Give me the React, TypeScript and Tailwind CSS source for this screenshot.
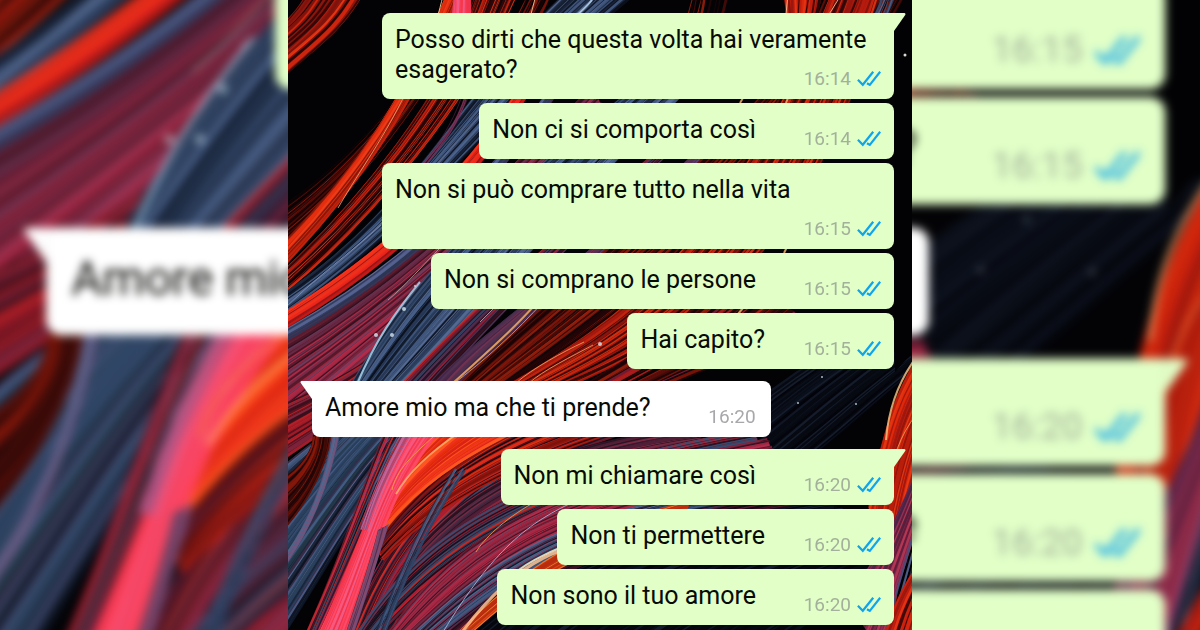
type Curve = [number, number, number, number, number, number, number, number];

interface Band {
  from: Curve;
  to: Curve;
  count: number;
  width: number;
  colors: string[];
  base?: string;
}

interface Message {
  text: string;
  time: string;
  side: "in" | "out";
  room: string;
  tail?: boolean;
}

const REDS = ["#d8280f", "#7c130c", "#b81c10", "#2c0607", "#ea3613", "#120406", "#92160f"];
const EMBER = ["#4a0c08", "#1a0506", "#7a150b", "#050305", "#9e210d", "#240608"];
const BLUES = ["#3d5478", "#1a2438", "#5a6f98", "#243450", "#0c1220", "#485f88", "#2c4260"];
const CRIMSON = ["#8c2038", "#4a1424", "#a82844", "#2a1020", "#6a2c48", "#bb2d4c", "#5c1a2c", "#70405f"];
const MIXED = ["#b52035", "#241424", "#394c70", "#7a1c30", "#12101c", "#d82a24", "#5c3358", "#3a101c"];
const PINK = ["#fa3548", "#f8587e", "#ff4a68", "#f0344e", "#f05c8a", "#ff3c4c"];
const NIGHT = ["#070a12", "#121928", "#03040a", "#182030", "#0b101c"];

const BANDS: Band[] = [
  { from: [20, -10, 10, 10, -5, 25, -20, 35], to: [78, -10, 50, 40, 25, 48, -20, 92], count: 24, width: 3, colors: REDS, base: "#8a170d" },
  { from: [160, -10, 150, 60, 70, 160, -20, 215], to: [190, -10, 150, 90, 70, 190, -20, 270], count: 30, width: 2, colors: EMBER, base: "#1c0506" },
  { from: [160, -10, 120, 90, 70, 170, -20, 258], to: [175, -10, 130, 95, 75, 190, -20, 282], count: 16, width: 3, colors: ["#e83010", "#c4220c", "#f2401a", "#7c160a"], base: "#cc280e" },
  { from: [190, -10, 160, 90, 70, 205, -20, 285], to: [230, -10, 190, 90, 80, 230, -20, 305], count: 24, width: 2, colors: REDS, base: "#2a080c" },
  { from: [166, -10, 164, 20, 162, 30, 160, 40], to: [182, -10, 184, 20, 182, 30, 180, 40], count: 10, width: 3, colors: PINK, base: "#e04468" },
  { from: [280, -10, 170, 90, 120, 220, -20, 303], to: [350, -10, 200, 110, 140, 220, -20, 325], count: 30, width: 3, colors: BLUES, base: "#1a2338" },
  { from: [175, 95, 165, 125, 150, 145, 130, 170], to: [182, 95, 172, 125, 155, 145, 135, 170], count: 4, width: 2, colors: ["#843058", "#5c2448"] },
  { from: [230, 90, 170, 180, 100, 250, -20, 322], to: [240, 95, 180, 190, 110, 265, -20, 338], count: 13, width: 3, colors: ["#f0281c", "#c91a18", "#f6351c", "#8a1418"], base: "#cf1c18" },
  { from: [260, 90, 190, 190, 110, 270, -20, 340], to: [270, 90, 200, 200, 120, 280, -20, 352], count: 9, width: 3, colors: ["#56618f", "#2c3552", "#6c74a4", "#453458"], base: "#343d5e" },
  { from: [300, 90, 200, 190, 110, 285, -20, 352], to: [330, 120, 220, 250, 110, 330, -20, 445], count: 62, width: 3, colors: CRIMSON, base: "#651c30" },
  { from: [330, 130, 220, 260, 110, 360, -20, 410], to: [350, 130, 230, 260, 110, 390, -20, 470], count: 28, width: 3, colors: ["#a81c28", "#5e1220", "#c42428", "#35101c", "#812640"], base: "#5c1220" },
  { from: [370, 70, 190, 210, 120, 280, 55, 400], to: [410, 80, 240, 240, 180, 330, 90, 410], count: 52, width: 3, colors: BLUES, base: "#2c4060" },
  { from: [420, 110, 250, 250, 160, 330, 100, 400], to: [430, 110, 260, 260, 200, 330, 135, 400], count: 22, width: 2, colors: MIXED, base: "#251426" },
  { from: [430, 130, 270, 290, 190, 330, 135, 395], to: [440, 130, 280, 300, 220, 330, 165, 395], count: 12, width: 4, colors: ["#604070", "#513050", "#7a3450", "#40264a"], base: "#50304e" },
  { from: [560, -10, 400, 200, 260, 290, 160, 395], to: [620, -10, 500, 220, 370, 310, 220, 395], count: 50, width: 3, colors: EMBER, base: "#260708" },
  { from: [540, -10, 430, 260, 320, 320, 200, 395], to: [600, -10, 520, 270, 400, 340, 260, 395], count: 32, width: 3, colors: REDS, base: "#590e08" },
  { from: [440, 270, 400, 320, 340, 360, 270, 400], to: [520, 320, 480, 350, 410, 370, 350, 400], count: 34, width: 3, colors: [...EMBER, "#b81e20", "#7c203c"], base: "#2a080a" },
  { from: [560, 340, 510, 370, 460, 405, 410, 450], to: [640, 360, 600, 390, 560, 430, 520, 460], count: 34, width: 3, colors: NIGHT, base: "#070a12" },
  { from: [80, 395, 50, 430, 20, 440, -20, 480], to: [180, 395, 90, 460, 60, 540, -20, 660], count: 60, width: 4, colors: [...BLUES, "#243c4c", "#3c2c48"], base: "#1c2c40" },
  { from: [25, 435, 25, 455, 5, 475, -20, 485], to: [42, 435, 38, 475, 10, 520, -20, 545], count: 20, width: 3, colors: ["#350a08", "#1b0507", "#651108", "#8c190a"], base: "#2d0908" },
  { from: [45, 425, 40, 470, 22, 530, -20, 575], to: [54, 425, 45, 475, 25, 535, -20, 590], count: 7, width: 3, colors: ["#526b92", "#3a4c70", "#775078"], base: "#3c4e72" },
  { from: [110, 400, 75, 470, 70, 520, 10, 650], to: [160, 400, 100, 480, 75, 540, 25, 650], count: 24, width: 2, colors: [...MIXED, "#c42c54"] },
  { from: [380, 400, 150, 430, 100, 530, 50, 650], to: [430, 410, 270, 440, 130, 510, 100, 650], count: 66, width: 3, colors: MIXED, base: "#571827" },
  { from: [300, 395, 200, 435, 140, 470, 90, 545], to: [430, 400, 280, 445, 170, 480, 95, 560], count: 44, width: 3, colors: [...REDS, "#e8301c", "#d42c24", "#4a1830"], base: "#8c180e" },
  { from: [190, 395, 140, 435, 100, 480, 78, 545], to: [310, 395, 190, 445, 130, 480, 85, 545], count: 36, width: 3, colors: ["#f24012", "#e82e0c", "#ff5720", "#d92215", "#ee3225"], base: "#e53010" },
  { from: [380, 430, 230, 450, 115, 510, 75, 650], to: [420, 440, 270, 460, 135, 530, 88, 650], count: 30, width: 3, colors: ["#532038", "#26121e", "#7c2a44", "#402c44", "#a3233a"], base: "#331625" },
  { from: [130, 415, 80, 500, 70, 560, 22, 650], to: [165, 415, 90, 500, 90, 560, 54, 650], count: 40, width: 4, colors: PINK, base: "#f53d58" },
  { from: [122, 415, 95, 460, 80, 500, 72, 530], to: [142, 410, 105, 460, 90, 500, 80, 530], count: 8, width: 2, colors: ["#c05c90", "#d4669c", "#8c5284", "#ee5c88"] },
  { from: [90, 530, 80, 570, 65, 610, 52, 650], to: [100, 525, 88, 565, 75, 610, 60, 650], count: 9, width: 2, colors: ["#77507d", "#543052", "#904868"], base: "#54304e" },
  { from: [460, 430, 230, 470, 125, 530, 60, 650], to: [480, 450, 270, 490, 150, 560, 80, 650], count: 50, width: 3, colors: [...MIXED, "#dc2418"], base: "#481120" },
  { from: [165, 470, 138, 515, 120, 550, 82, 650], to: [180, 470, 145, 520, 126, 560, 92, 650], count: 10, width: 2, colors: ["#3e5e88", "#4c6c94", "#2b3f60", "#1c2840"] },
  { from: [480, 440, 230, 490, 155, 550, 90, 650], to: [500, 490, 260, 500, 190, 590, 110, 650], count: 56, width: 3, colors: CRIMSON, base: "#7c1f37" },
  { from: [520, 480, 280, 500, 200, 560, 110, 650], to: [520, 500, 300, 510, 210, 600, 140, 650], count: 44, width: 3, colors: [...BLUES, "#5f2c4c", "#8c2c4c"], base: "#252b46" },
  { from: [520, 490, 290, 530, 220, 580, 140, 650], to: [530, 510, 300, 540, 230, 590, 155, 650], count: 18, width: 3, colors: ["#170b18", "#411424", "#0a0810", "#662038"], base: "#160b16" },
  { from: [400, 500, 260, 540, 215, 590, 150, 650], to: [400, 520, 270, 555, 220, 600, 165, 650], count: 10, width: 3, colors: ["#e44916", "#b92c0e", "#f18235"], base: "#bf3512" },
  { from: [540, 500, 300, 540, 220, 600, 168, 650], to: [620, 560, 560, 590, 500, 640, 420, 690], count: 34, width: 4, colors: NIGHT, base: "#05070c" },
  { from: [650, 330, 605, 385, 600, 420, 580, 500], to: [690, 370, 640, 430, 620, 500, 600, 660], count: 34, width: 3, colors: ["#e32a0c", "#b81f0c", "#8c140c", "#ec3c12", "#9c1710"], base: "#b81c0c" },
  { from: [640, 440, 620, 490, 605, 530, 560, 600], to: [660, 450, 630, 510, 620, 560, 590, 650], count: 16, width: 3, colors: ["#943158", "#5c1c38", "#b93a55", "#462648"], base: "#80264a" },
  { from: [645, 470, 625, 530, 615, 570, 590, 660], to: [660, 480, 650, 520, 640, 580, 610, 660], count: 10, width: 3, colors: ["#3c5080", "#252a48", "#51618c"] },
  { from: [650, 540, 620, 570, 600, 610, 590, 660], to: [670, 560, 650, 590, 640, 620, 630, 660], count: 14, width: 4, colors: REDS, base: "#c9200f" },
  { from: [240, -10, 235, 5, 230, 15, 220, 30], to: [265, -10, 260, 5, 255, 15, 245, 30], count: 12, width: 3, colors: EMBER },
  { from: [405, -10, 402, 5, 400, 15, 395, 30], to: [440, -10, 438, 5, 436, 15, 430, 30], count: 14, width: 3, colors: EMBER },
  { from: [495, -10, 497, 5, 498, 15, 500, 30], to: [535, -10, 532, 5, 530, 15, 525, 30], count: 14, width: 3, colors: REDS, base: "#c01c0c" },
  { from: [565, -10, 560, 5, 555, 15, 548, 30], to: [585, -10, 582, 5, 578, 15, 570, 30], count: 10, width: 3, colors: REDS, base: "#b01a0c" },
  { from: [595, -10, 590, 5, 585, 15, 575, 30], to: [608, -10, 605, 5, 600, 15, 592, 30], count: 7, width: 3, colors: BLUES },
];

const GLINTS: { d: string; color: string; width: number }[] = [
  { d: "M118 92C95 140 75 165 50 208", color: "#e8a070", width: 1 },
  { d: "M155 -5C153 5 151 10 149 20", color: "#f4d7a0", width: 1 },
  { d: "M248 -5L243 14M500 -5L498 14M553 -5L540 16", color: "#f4c9a0", width: 1 },
  { d: "M304 0C298 8 292 12 286 18", color: "#b8d4ea", width: 2 },
  { d: "M93 225C60 255 30 275 -10 315", color: "#7c92b8", width: 1 },
  { d: "M152 248C135 265 118 285 100 300", color: "#b49c96", width: 1 },
  { d: "M132 282C105 315 88 340 69 384", color: "#a9d3ec", width: 2 },
  { d: "M206 308L192 322M255 302C230 330 195 362 165 384", color: "#e89a58", width: 1 },
  { d: "M245 307C220 335 190 360 166 382", color: "#f5ad62", width: 2 },
  { d: "M296 342C275 352 245 368 228 383M305 345C285 356 255 370 240 384", color: "#f0a060", width: 1 },
  { d: "M145 437C125 455 108 470 104 490", color: "#f6a13c", width: 1 },
  { d: "M172 432C145 450 122 470 108 494", color: "#ffb16a", width: 2 },
  { d: "M245 503C215 520 195 540 188 552", color: "#e8a050", width: 1 },
  { d: "M290 500C240 522 205 550 155 632", color: "#a9b9e2", width: 1 },
  { d: "M274 550C240 562 205 590 172 635", color: "#ffc490", width: 3 },
  { d: "M274 547C255 555 235 565 225 575", color: "#fff0c8", width: 2 },
  { d: "M630 355C607 385 600 415 598 440", color: "#f1bd7c", width: 2 },
  { d: "M628 415C612 435 604 460 598 490", color: "#f09a5a", width: 1 },
  { d: "M500 245L496 253M455 98L452 103M500 98L498 103M455 308L450 314", color: "#f0b070", width: 2 },
];

const SPARKS: [number, number, number][] = [
  [116, 309, 2], [88, 335, 2], [104, 335, 2], [127, 286, 1], [312, 344, 2],
  [534, 377, 1], [510, 403, 1], [568, 404, 1],
];

function random(seed: number) {
  const value = Math.sin(seed * 127.1 + 11.7) * 43758.5453;
  return value - Math.floor(value);
}

function toPath(c: number[]) {
  return `M${c[0]} ${c[1]}C${c[2]} ${c[3]} ${c[4]} ${c[5]} ${c[6]} ${c[7]}`;
}

const STRANDS = BANDS.map((band, b) => {
  const { from: a, to: z } = band;
  return {
    base: band.base,
    area: `${toPath(a)}L${z[6]} ${z[7]}C${z[4]} ${z[5]} ${z[2]} ${z[3]} ${z[0]} ${z[1]}Z`,
    lines: Array.from({ length: band.count }, (_, i) => {
      const seed = b * 97 + i * 3 + 1;
      const t = (i + random(seed)) / band.count;
      const points = a.map((v, k) => Math.round((v + (z[k] - v) * t + (random(seed + k) - 0.5) * 3) * 10) / 10);
      return {
        d: toPath(points),
        color: band.colors[Math.floor(random(seed + 1) * band.colors.length)],
        width: band.width * (0.3 + random(seed + 2) * 0.7),
      };
    }),
  };
});

const MESSAGES: Message[] = [
  { text: "Posso dirti che questa volta hai veramente esagerato?", time: "16:14", side: "out", room: "w-[116px]", tail: true },
  { text: "Non ci si comporta così", time: "16:14", side: "out", room: "w-[125px]" },
  { text: "Non si può comprare tutto nella vita", time: "16:15", side: "out", room: "w-[116px]" },
  { text: "Non si comprano le persone", time: "16:15", side: "out", room: "w-[125px]" },
  { text: "Hai capito?", time: "16:15", side: "out", room: "w-[116px]" },
  { text: "Amore mio ma che ti prende?", time: "16:20", side: "in", room: "w-[107px]", tail: true },
  { text: "Non mi chiamare così", time: "16:20", side: "out", room: "w-[125px]", tail: true },
  { text: "Non ti permettere", time: "16:20", side: "out", room: "w-[116px]" },
  { text: "Non sono il tuo amore", time: "16:20", side: "out", room: "w-[125px]" },
];

function Wallpaper() {
  return (
    <svg
      className="absolute inset-0 size-full overflow-visible"
      viewBox="0 0 624 630"
      preserveAspectRatio="xMidYMid slice"
      fill="none"
      aria-hidden="true"
    >
      <path d="M-40 -40H664V670H-40Z" fill="#030306" />
      {STRANDS.map((band, b) => (
        <g key={b}>
          {band.base && <path d={band.area} fill={band.base} />}
          {band.lines.map((line, i) => (
            <path key={i} d={line.d} stroke={line.color} strokeWidth={line.width} opacity="0.85" />
          ))}
        </g>
      ))}
      {GLINTS.map((glint, i) => (
        <path key={i} d={glint.d} stroke={glint.color} strokeWidth={glint.width} opacity="0.85" />
      ))}
      {SPARKS.map(([x, y, r], i) => (
        <circle key={i} cx={x} cy={y} r={r} fill="#d5e8f2" opacity="0.8" />
      ))}
      <path d="M607 20H640V335L607 372Z" fill="#020204" />
      <circle cx="617" cy="55" r="1.5" fill="#d8d8d0" />
    </svg>
  );
}

function ReadTicks() {
  return (
    <svg className="h-4 w-6" viewBox="0 0 24 16" fill="none" stroke="#0ea5ee" strokeWidth="2.2" aria-label="Letto" role="img">
      <path d="M0.9 8.8L5.8 13.8L16.2 0.8" />
      <path d="M10 12.2L12.8 13.9L23.2 0.8" />
    </svg>
  );
}

function Bubble({ message }: { message: Message }) {
  const sent = message.side === "out";
  return (
    <li
      className={
        "relative max-w-[512px] rounded-lg px-[13px] pt-3 pb-[14px] " +
        (sent ? "self-end bg-[#e1ffc7] " : "my-2 ml-1.5 self-start bg-white ") +
        (message.tail ? (sent ? "rounded-tr-none" : "rounded-tl-none") : "")
      }
    >
      {message.tail && (
        <svg
          className={"absolute top-0 h-[18px] w-3 " + (sent ? "left-full" : "right-full -scale-x-100")}
          viewBox="0 0 12 18"
          aria-hidden="true"
        >
          <path d="M-1 0H10.5Q12 0.5 11.2 2L0 18H-1Z" fill={sent ? "#e1ffc7" : "#ffffff"} />
        </svg>
      )}
      <p className="text-[25px] leading-[30px] text-[#080a06]">
        {message.text}
        <span className={"inline-block h-px " + message.room} />
      </p>
      <div className={"absolute bottom-2 flex items-center gap-1.5 " + (sent ? "right-[13px]" : "right-[15px]")}>
        <time className={"text-[19px] leading-6 " + (sent ? "text-[#a3b09b]" : "text-[#a8a8ac]")}>{message.time}</time>
        {sent && <ReadTicks />}
      </div>
    </li>
  );
}

function Conversation() {
  return (
    <div className="relative min-h-full">
      <Wallpaper />
      <ul className="relative flex flex-col gap-1 px-[18px] pt-[13px] pb-[5px]">
        {MESSAGES.map((message) => (
          <Bubble key={message.text} message={message} />
        ))}
      </ul>
    </div>
  );
}

export default function App() {
  return (
    <div className="relative flex min-h-screen justify-center overflow-hidden bg-black font-['Roboto',sans-serif]">
      <div className="absolute inset-0 blur-[5px]" aria-hidden="true">
        <div className="w-[52%] origin-top-left -translate-y-[505px] scale-[1.923]">
          <Conversation />
        </div>
      </div>
      <main className="relative w-[52%] overflow-hidden">
        <Conversation />
      </main>
    </div>
  );
}
